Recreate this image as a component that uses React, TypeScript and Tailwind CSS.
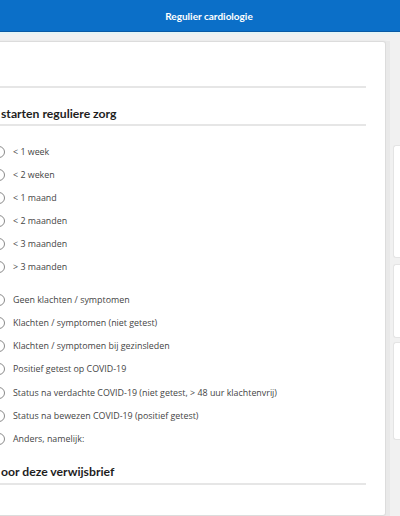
import React from "react";

const group1 = ["< 1 week", "< 2 weken", "< 1 maand", "< 2 maanden", "< 3 maanden", "> 3 maanden"];
const group2 = [
  "Geen klachten / symptomen",
  "Klachten / symptomen (niet getest)",
  "Klachten / symptomen bij gezinsleden",
  "Positief getest op COVID-19",
  "Status na verdachte COVID-19 (niet getest, > 48 uur klachtenvrij)",
  "Status na bewezen COVID-19 (positief getest)",
  "Anders, namelijk:",
];

function Radio({ label, h }: { label: string; h: string }) {
  return (
    <div className={`flex items-center ${h}`}>
      <span className="block w-[12px] h-[12px] rounded-full border border-[#8a8a8a] bg-white shrink-0" />
      <span
        className="ml-[8px] text-[8.9px] leading-[14px] text-[#454545] whitespace-nowrap"
        style={{ fontFamily: '"Open Sans", Arial, sans-serif' }}
      >
        {label}
      </span>
    </div>
  );
}

export default function App() {
  return (
    <div
      className="w-[400px] h-[516px] overflow-hidden bg-[#f1f1f1] flex flex-col"
      style={{ fontFamily: 'Lato, "Open Sans", Arial, sans-serif' }}
    >
      <div className="h-[32px] shrink-0 bg-[#0b6fc8] border-b border-[#0a5aa5] flex items-center justify-center pl-[18px]">
        <span className="text-white font-bold text-[10px] leading-[14px]">Regulier cardiologie</span>
      </div>
      <div className="h-[2px] bg-[#e6f4f6] shrink-0" />
      <div className="flex flex-1 pt-[7px] min-h-0">
        <div className="ml-[-40px] w-[426px] shrink-0 bg-white border border-[#dcdcdc] rounded-[3px] shadow-[1px_0_2px_rgba(0,0,0,0.08)] pl-[32px] pr-[19px]">
          <div className="h-[44px]" />
          <div className="h-[2px] bg-[#e6e6e6]" />
          <div className="pt-[18px] pb-[2px] ml-[8px]">
            <div className="text-[12.2px] leading-[16px] font-bold text-[#1e1e1e]">starten reguliere zorg</div>
          </div>
          <div className="h-[2px] bg-[#e6e6e6]" />
          <div className="mt-[14px]">
            {group1.map((l) => (
              <Radio key={l} label={l} h="h-[23px]" />
            ))}
          </div>
          <div className="mt-[10px]">
            {group2.map((l) => (
              <Radio key={l} label={l} h="h-[23.25px]" />
            ))}
          </div>
          <div className="mt-[13px] mb-[3px] ml-[8px]">
            <div className="text-[12.2px] leading-[16px] font-bold text-[#1e1e1e]">oor deze verwijsbrief</div>
          </div>
          <div className="h-[2px] bg-[#e6e6e6]" />
        </div>
        <div className="flex-1 border-l-[4px] border-[#e9e9e9] pl-[3px] flex flex-col">
          <div className="h-[104px]" />
          <div className="h-[113px] bg-white border border-[#e4e4e4] rounded-l-[3px] border-r-0" />
          <div className="h-[6px]" />
          <div className="h-[74px] bg-white border border-[#e4e4e4] rounded-l-[3px] border-r-0" />
          <div className="h-[4px]" />
          <div className="h-[98px] bg-white border border-[#e4e4e4] rounded-l-[3px] border-r-0" />
        </div>
      </div>
    </div>
  );
}
